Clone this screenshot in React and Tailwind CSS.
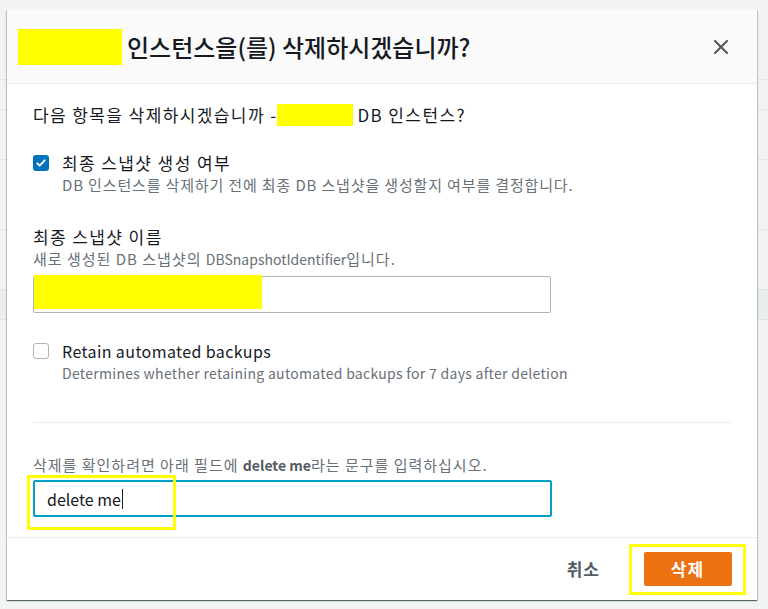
import React from "react";

const font = { fontFamily: '"Noto Sans CJK KR", "Noto Sans", sans-serif' };

const CheckIcon = () => (
  <svg viewBox="0 0 16 16" className="h-3 w-3" fill="none" stroke="white" strokeWidth="2.6" strokeLinecap="round" strokeLinejoin="round">
    <path d="M3 8.5l3.2 3L13 4.5" />
  </svg>
);

const CheckRow = ({ checked, label, desc, korean }) => (
  <div className="flex items-start">
    <div
      className={
        checked
          ? "mt-[4px] flex h-[16px] w-[16px] shrink-0 items-center justify-center rounded-[3px] bg-[#0073bb]"
          : "mt-[4px] h-[16px] w-[16px] shrink-0 rounded-[3px] border border-[#aab7b8] bg-white"
      }
    >
      {checked && <CheckIcon />}
    </div>
    <div className="ml-[13px]">
      <div
        className={
          korean
            ? "text-[17px] leading-[24px] tracking-[1.4px] text-[#16191f]"
            : "text-[16px] leading-[24px] tracking-[0.4px] text-[#16191f]"
        }
      >
        {label}
      </div>
      <div
        className={
          korean
            ? "text-[15px] leading-[20px] tracking-[0.85px] text-[#687078]"
            : "text-[14px] leading-[20px] tracking-[0.3px] text-[#687078]"
        }
      >
        {desc}
      </div>
    </div>
  </div>
);

export default function App() {
  return (
    <div className="relative h-[609px] w-[768px] overflow-hidden bg-[#f2f3f3]" style={font}>
      {/* faint page behind */}
      <div className="absolute inset-0 flex flex-col">
        <div className="h-[80px] border-b border-[#e4e7e7]" />
        <div className="h-[30px] border-b border-[#e4e7e7]" />
        <div className="h-[50px] border-b border-[#e4e7e7]" />
        <div className="h-[70px] border-b border-[#e4e7e7]" />
        <div className="h-[60px] border-b border-[#e4e7e7]" />
        <div className="h-[30px] border-b border-[#dfe3e3] bg-[#eaeded]" />
      </div>

      <div className="relative ml-[7px] mt-[10px] flex h-[590px] w-[750px] flex-col bg-white shadow-[0_1px_1px_0_rgba(0,28,36,0.5),1px_1px_1px_0_rgba(0,28,36,0.15),-1px_1px_1px_0_rgba(0,28,36,0.15)]">
        {/* header */}
        <div className="flex h-[74px] shrink-0 items-center border-b border-[#eaeded] bg-[#fafafa] pl-[11px] pr-[28px]">
          <div className="h-[36px] w-[104px] bg-[#ffff00]" />
          <h2 className="ml-[5px] text-[24px] font-medium text-[#16191f]">
            인스턴스을(를) 삭제하시겠습니까?
          </h2>
          <button className="ml-auto text-[#545b64]">
            <svg viewBox="0 0 16 16" className="h-[16px] w-[16px]" fill="none" stroke="currentColor" strokeWidth="2.2" strokeLinecap="round">
              <path d="M2 2l12 12M14 2L2 14" />
            </svg>
          </button>
        </div>

        {/* body */}
        <div className="flex flex-1 flex-col px-[26px] pt-[19px]">
          <div className="flex items-center text-[17px] leading-[24px] tracking-[1.4px] text-[#16191f]">
            <span>다음 항목을 삭제하시겠습니까 -</span>
            <span className="h-[22px] w-[76px] bg-[#ffff00]" />
            <span className="ml-[4px]">DB 인스턴스?</span>
          </div>

          <div className="mt-[24px]">
            <CheckRow korean checked label="최종 스냅샷 생성 여부" desc="DB 인스턴스를 삭제하기 전에 최종 DB 스냅샷을 생성할지 여부를 결정합니다." />
          </div>

          <div className="mt-[30px]">
            <div className="text-[17px] leading-[24px] tracking-[1.4px] text-[#16191f]">최종 스냅샷 이름</div>
            <div className="text-[15px] leading-[20px] tracking-[1px] text-[#687078]">
              새로 생성된 DB 스냅샷의 <span className="text-[14px] tracking-normal">DBSnapshotIdentifier</span>입니다.
            </div>
            <div className="relative mt-[7px] h-[37px] w-[518px] rounded-[2px] border border-[#aab7b8] bg-white">
              <div className="absolute -top-[2px] left-0 h-[34px] w-[228px] bg-[#ffff00]" />
            </div>
          </div>

          <div className="mt-[26px]">
            <CheckRow label="Retain automated backups" desc="Determines whether retaining automated backups for 7 days after deletion" />
          </div>

          <div className="mt-[39px] h-px w-[698px] bg-[#eaeded]" />

          <div className="mt-[32px] text-[15px] leading-[20px] tracking-[1px] text-[#687078]">
            삭제를 확인하려면 아래 필드에 <b className="text-[14px] font-bold tracking-normal text-[#545b64]">delete me</b>라는 문구를 입력하십시오.
          </div>
          <div className="relative mt-[5px] flex h-[37px] w-[519px] items-center rounded-[2px] border-2 border-[#00a1c9] bg-white pl-[12px] text-[16px] text-[#16191f]">
            <span>delete me</span>
            <span className="ml-px h-[20px] w-px bg-[#16191f]" />
            <div className="absolute -left-[8px] -top-[7px] h-[55px] w-[149px] border-[3px] border-[#ffff00]" />
          </div>
        </div>

        {/* footer */}
        <div className="flex h-[63px] shrink-0 items-center justify-end border-t border-[#eaeded] pr-[25px]">
          <button className="mr-[29px] text-[17px] font-bold tracking-[1px] text-[#545b64]">취소</button>
          <div className="-mr-[14px] flex h-[51px] w-[117px] items-center justify-center border-[3px] border-[#ffff00]">
            <button className="flex h-[34px] w-[88px] items-center justify-center rounded-[2px] bg-[#ec7211] text-[17px] font-bold tracking-[1px] text-white">
              삭제
            </button>
          </div>
        </div>
      </div>
    </div>
  );
}
